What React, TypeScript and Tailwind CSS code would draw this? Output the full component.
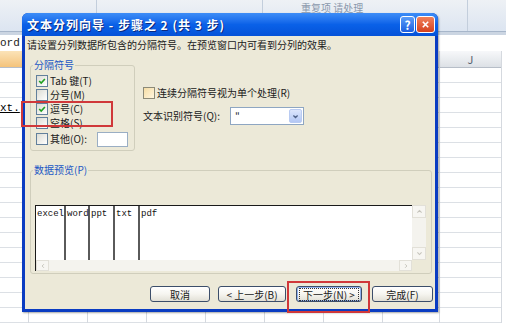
import React from "react";

const font = "font-['Noto_Sans_CJK_SC','Liberation_Sans',sans-serif]";

const Check = ({ checked, hot }: { checked?: boolean; hot?: boolean }) => (
  <span
    className={`w-[12px] h-[12px] shrink-0 border flex items-center justify-center ${
      hot ? "border-[#8C8A78] bg-gradient-to-br from-[#F6DDA4] to-[#FFF6DF]" : "border-[#62809C] bg-gradient-to-br from-[#DCDCD4] to-white"
    }`}
  >
    {checked && (
      <svg viewBox="0 0 10 10" className="w-[8px] h-[8px]">
        <path d="M1.5 5 L4 7.6 L8.6 2.4" stroke="#21A121" strokeWidth="2" fill="none" />
      </svg>
    )}
  </span>
);

const Row = ({ checked, label }: { checked?: boolean; label: string }) => (
  <div className="h-[14px] flex items-center gap-[1px]">
    <Check checked={checked} />
    <span className="text-[10px] leading-[12px] text-[#202020] ml-[1px]">{label}</span>
  </div>
);

const Btn = ({ w, label, focus }: { w: string; label: string; focus?: boolean }) => (
  <div
    className={`${w} h-[16px] rounded-[3px] border border-[#3C4E6A] bg-gradient-to-b from-white via-[#F6F5F0] to-[#E2E0D6] flex items-center justify-center ${
      focus ? "shadow-[inset_0_0_0_1px_#8FB1EE]" : ""
    }`}
  >
    <span
      className={`text-[10px] leading-[11px] text-[#202020] px-[3px] ${
        focus ? "outline outline-1 outline-dotted outline-[#333]" : ""
      }`}
    >
      {label}
    </span>
  </div>
);

const cols = [
  { w: "w-[29px]", head: "bg-gradient-to-b from-[#FBE3B8] to-[#F4C37A]" },
  { w: "w-[59px]" },
  { w: "w-[59px]" },
  { w: "w-[59px]" },
  { w: "w-[59px]" },
  { w: "w-[59px]" },
  { w: "w-[59px]" },
  { w: "w-[57px]" },
  { w: "w-[62px]", label: "J" },
];

export default function App() {
  return (
    <div className={`relative w-[506px] h-[323px] overflow-hidden bg-white ${font}`}>
      {/* spreadsheet behind */}
      <div className="flex flex-col">
        <div className="h-[32px] flex bg-gradient-to-b from-[#EEF1F5] to-[#DCE5F1] border-b border-[#A7B6CA]">
          <div className="w-[97px] border-r border-[#C3CEDC]" />
          <div className="w-[166px] border-r border-[#C3CEDC]" />
          <div className="w-[205px] border-r border-[#C3CEDC] pl-[38px] pt-[1px]">
            <div className="text-[10px] leading-[14px] text-[#8A98AC]">重复项 请处理</div>
          </div>
          <div className="flex-1" />
        </div>
        <div className="h-[3px] bg-[#CBD5E2]" />
        <div className="h-[16px] bg-white flex items-center">
          <span className="font-['Liberation_Mono',monospace] text-[11px] leading-[13px] text-[#222]">ord</span>
        </div>
        <div className="flex">
          {cols.map((c, i) => (
            <div key={i} className={`${c.w} flex flex-col border-r border-[#D5D9DF]`}>
              <div
                className={`h-[17px] flex items-center justify-center border-b border-[#B7BEC8] text-[11px] text-[#5A6470] ${
                  c.head ?? "bg-gradient-to-b from-[#F7F8FA] to-[#DDE1E6]"
                }`}
              >
                {c.label}
              </div>
              {Array.from({ length: 17 }).map((_, r) => (
                <div key={r} className="h-[15px] border-b border-[#DCE0E5] flex items-end">
                  {i === 0 && r === 2 && (
                    <span className="font-['Liberation_Mono',monospace] text-[11px] leading-[12px] text-black underline mb-[-2px]">
                      xt.
                    </span>
                  )}
                </div>
              ))}
            </div>
          ))}
        </div>
      </div>

      {/* dialog window */}
      <div className="absolute left-[22px] top-[13px] w-[416px] h-[299px] flex flex-col rounded-t-[6px] bg-[#0A3CC2] shadow-[1px_1px_2px_rgba(0,0,0,0.35)]">
        <div className="h-[23px] shrink-0 rounded-t-[6px] bg-gradient-to-b from-[#3D8DF7] via-[#0A61E8] to-[#0552D8] flex items-center pl-[5px] pr-[3px]">
          <span className="text-[12px] font-bold text-white tracking-[1px] [text-shadow:1px_1px_0_#0A2A80]">
            文本分列向导 - 步骤之 2 (共 3 步)
          </span>
          <div className="ml-auto flex gap-[1px]">
            <div className="w-[15px] h-[17px] rounded-[3px] border border-white bg-gradient-to-b from-[#5A9CF8] to-[#1C5EE0] flex items-center justify-center text-white text-[12px] font-bold leading-none">
              ?
            </div>
            <div className="w-[19px] h-[17px] rounded-[3px] border border-white bg-gradient-to-b from-[#F0805A] to-[#D4401C] flex items-center justify-center">
              <svg viewBox="0 0 10 10" className="w-[9px] h-[9px]">
                <path d="M2 2 L8 8 M8 2 L2 8" stroke="white" strokeWidth="1.8" />
              </svg>
            </div>
          </div>
        </div>

        <div className="flex-1 mx-[3px] mb-[3px] bg-[#ECE9D8] flex flex-col text-[#202020]">
          <div className="ml-[2px] mt-[3px] text-[10px] leading-[12px]">
            请设置分列数据所包含的分隔符号。在预览窗口内可看到分列的效果。
          </div>

          <div className="flex mt-[8px]">
            <fieldset className="ml-[5px] w-[105px] border border-[#D0CEBC] rounded-[3px] pl-[5px] pb-[3px]">
              <legend className="text-[10px] leading-[12px] text-[#2257C4] px-[1px] -ml-[3px]">分隔符号</legend>
              <div className="flex flex-col pt-[3px]">
                <Row checked label="Tab 键(T)" />
                <Row label="分号(M)" />
                <Row checked label="逗号(C)" />
                <Row label="空格(S)" />
                <div className="h-[16px] mt-[1px] flex items-center">
                  <Check />
                  <span className="text-[10px] leading-[12px] ml-[2px]">其他(O):</span>
                  <div className="ml-[10px] w-[31px] h-[15px] bg-white border border-[#9AAEC4]" />
                </div>
              </div>
            </fieldset>

            <div className="ml-[8px] flex flex-col mt-[27px]">
              <div className="h-[14px] flex items-center gap-[2px]">
                <Check hot />
                <span className="text-[10px] leading-[12px]">连续分隔符号视为单个处理(R)</span>
              </div>
              <div className="mt-[7px] flex items-center">
                <span className="text-[10px] leading-[12px] w-[87px]">文本识别符号(Q):</span>
                <div className="w-[74px] h-[18px] bg-white border border-[#8EA6C2] flex items-stretch p-[1px]">
                  <span className="flex-1 text-[10px] leading-[12px] pl-[3px] pt-[1px]">"</span>
                  <div className="w-[13px] rounded-[2px] border border-[#B9CBF2] bg-gradient-to-b from-[#DCE6FC] to-[#B3C7F4] flex items-center justify-center">
                    <svg viewBox="0 0 10 10" className="w-[7px] h-[7px]">
                      <path d="M2 3.5 L5 6.5 L8 3.5" stroke="#4C5F86" strokeWidth="1.8" fill="none" />
                    </svg>
                  </div>
                </div>
              </div>
            </div>
          </div>

          <fieldset className="ml-[5px] mt-[13px] w-[402px] border border-[#D0CEBC] rounded-[3px] pl-[4px] pr-[5px] pb-[2px]">
            <legend className="text-[10px] leading-[12px] text-[#2257C4] px-[1px] -ml-[2px]">数据预览(P)</legend>
            <div className="mt-[29px] h-[66px] flex flex-col">
              <div className="flex-1 flex">
                <div className="flex-1 bg-white border-t border-l border-[#1A1A1A] flex font-['Liberation_Mono',monospace] text-[9px] leading-[11px] text-[#111]">
                  {[
                    ["excel", "w-[30px]"],
                    ["word", "w-[24px]"],
                    ["ppt", "w-[25px]"],
                    ["txt", "w-[25px]"],
                  ].map(([t, w]) => (
                    <div key={t} className={`${w} h-full border-r-2 border-[#5A5A5A] pt-[3px] pl-[1px]`}>
                      {t}
                    </div>
                  ))}
                  <div className="flex-1 pt-[3px] pl-[1px]">pdf</div>
                </div>
                <div className="w-[14px] bg-[#F4F3EE] flex flex-col justify-between">
                  <div className="h-[13px] border border-[#E2E0D8] bg-[#F7F6F2] flex items-center justify-center">
                    <svg viewBox="0 0 10 10" className="w-[7px] h-[7px]">
                      <path d="M2 6.5 L5 3.5 L8 6.5" stroke="#C6C4BC" strokeWidth="1.6" fill="none" />
                    </svg>
                  </div>
                  <div className="h-[13px] border border-[#E2E0D8] bg-[#F7F6F2] flex items-center justify-center">
                    <svg viewBox="0 0 10 10" className="w-[7px] h-[7px]">
                      <path d="M2 3.5 L5 6.5 L8 3.5" stroke="#C6C4BC" strokeWidth="1.6" fill="none" />
                    </svg>
                  </div>
                </div>
              </div>
              <div className="h-[11px] flex">
                <div className="flex-1 bg-[#F4F3EE] border-l border-[#1A1A1A] flex justify-between">
                  <div className="w-[13px] border border-[#E2E0D8] bg-[#F7F6F2] flex items-center justify-center">
                    <svg viewBox="0 0 10 10" className="w-[6px] h-[6px]">
                      <path d="M6.5 2 L3.5 5 L6.5 8" stroke="#C6C4BC" strokeWidth="1.6" fill="none" />
                    </svg>
                  </div>
                  <div className="w-[13px] border border-[#E2E0D8] bg-[#F7F6F2] flex items-center justify-center">
                    <svg viewBox="0 0 10 10" className="w-[6px] h-[6px]">
                      <path d="M3.5 2 L6.5 5 L3.5 8" stroke="#C6C4BC" strokeWidth="1.6" fill="none" />
                    </svg>
                  </div>
                </div>
                <div className="w-[14px] bg-[#ECE9D8]" />
              </div>
            </div>
          </fieldset>

          <div className="mt-[12px] flex justify-end pr-[2px]">
            <Btn w="w-[60px]" label="取消" />
            <div className="w-[8px]" />
            <Btn w="w-[68px]" label="< 上一步(B)" />
            <div className="w-[10px]" />
            <Btn w="w-[66px]" label="下一步(N) >" focus />
            <div className="w-[10px]" />
            <Btn w="w-[61px]" label="完成(F)" />
          </div>
        </div>
      </div>

      {/* red annotation boxes */}
      <div className="absolute left-[21px] top-[101px] w-[92px] h-[26px] border-2 border-[#D0383A]" />
      <div className="absolute left-[287px] top-[281px] w-[83px] h-[32px] border-2 border-[#D0383A]" />
    </div>
  );
}
